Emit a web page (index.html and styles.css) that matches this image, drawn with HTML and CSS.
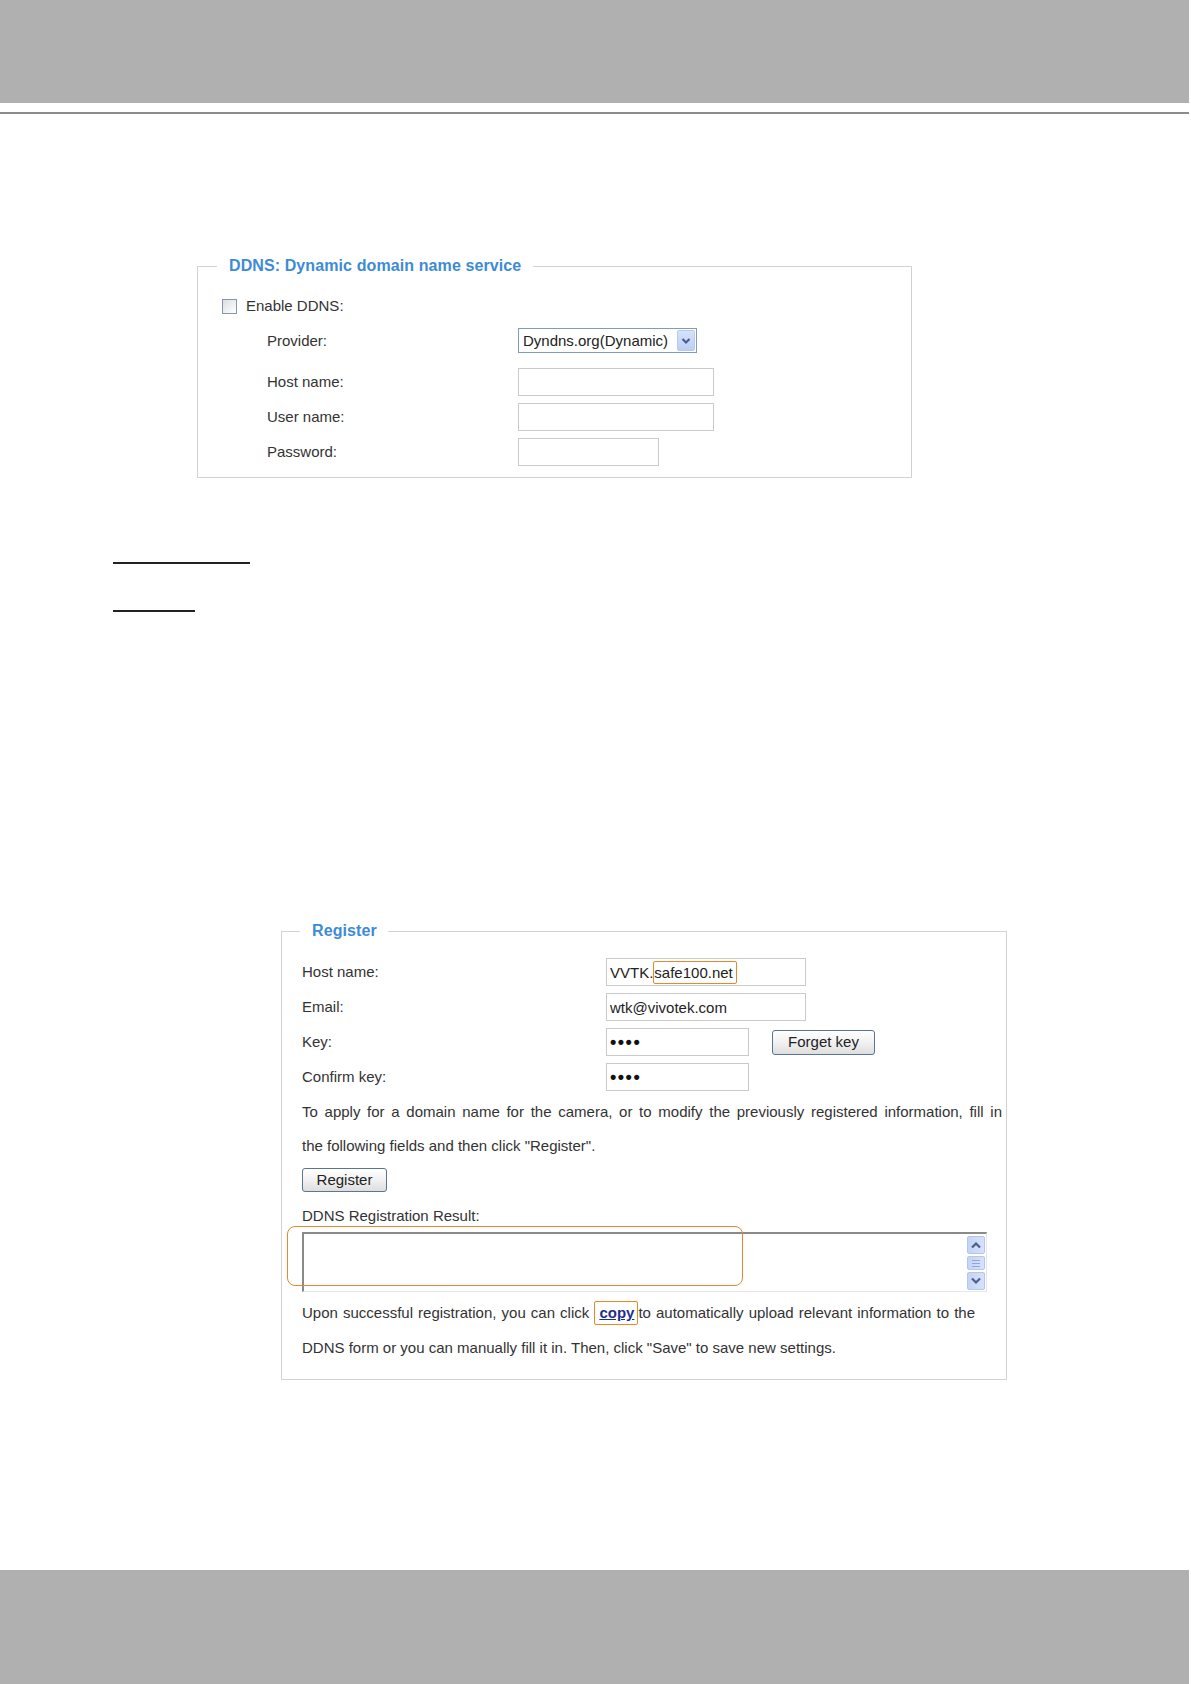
FILE: index.html
```html
<!DOCTYPE html>
<html lang="en">
<head>
<meta charset="utf-8">
<title>DDNS settings</title>
<link rel="stylesheet" href="styles.css">
</head>
<body>
<header class="page-header"></header>
<div class="page-rule"></div>

<main class="content">
  <fieldset class="panel panel-ddns">
    <legend class="panel-title">DDNS: Dynamic domain name service</legend>
    <div class="ddns-body">
      <div class="check-row">
        <span class="checkbox"></span>
        <span class="label">Enable DDNS:</span>
      </div>
      <div class="field-row row-provider">
        <span class="label field-label">Provider:</span>
        <div class="select">
          <span class="select-text">Dyndns.org(Dynamic)</span>
          <span class="select-btn">
            <svg width="10" height="8" viewBox="0 0 10 8"><polyline points="1.5,2 5,5.5 8.5,2" fill="none" stroke="#4b5f88" stroke-width="2.2"/></svg>
          </span>
        </div>
      </div>
      <div class="field-row row-host">
        <span class="label field-label">Host name:</span>
        <div class="textbox tb-wide"></div>
      </div>
      <div class="field-row row-gap">
        <span class="label field-label">User name:</span>
        <div class="textbox tb-wide"></div>
      </div>
      <div class="field-row row-gap">
        <span class="label field-label">Password:</span>
        <div class="textbox tb-short"></div>
      </div>
    </div>
  </fieldset>

  <div class="underline underline-1"></div>
  <div class="underline underline-2"></div>

  <fieldset class="panel panel-register">
    <legend class="panel-title">Register</legend>
    <div class="reg-body">
      <div class="reg-row">
        <span class="label reg-label">Host name:</span>
        <div class="textbox tb-reg">VVTK.<span class="mark mark-host">safe100.net</span></div>
      </div>
      <div class="reg-row reg-gap">
        <span class="label reg-label">Email:</span>
        <div class="textbox tb-reg">wtk@vivotek.com</div>
      </div>
      <div class="reg-row reg-gap">
        <span class="label reg-label">Key:</span>
        <div class="textbox tb-key"><span class="dots">••••</span></div>
        <button class="btn btn-forget" type="button">Forget key</button>
      </div>
      <div class="reg-row reg-gap">
        <span class="label reg-label">Confirm key:</span>
        <div class="textbox tb-key"><span class="dots">••••</span></div>
      </div>
      <p class="reg-text reg-text-1"><span class="line-just line-w1">To apply for a domain name for the camera, or to modify the previously registered information, fill in</span><span class="line">the following fields and then click "Register".</span></p>
      <button class="btn btn-register" type="button">Register</button>
      <div class="result-label">DDNS Registration Result:</div>
      <div class="result-wrap">
        <div class="result-area">
          <div class="result-text"></div>
          <div class="scrollbar">
            <span class="sb-btn">
              <svg width="12" height="8" viewBox="0 0 12 8"><polyline points="2,6.5 6,2.5 10,6.5" fill="none" stroke="#4b5f88" stroke-width="2.2"/></svg>
            </span>
            <span class="sb-thumb"><i></i><i></i><i></i></span>
            <span class="sb-btn">
              <svg width="12" height="8" viewBox="0 0 12 8"><polyline points="2,1.5 6,5.5 10,1.5" fill="none" stroke="#4b5f88" stroke-width="2.2"/></svg>
            </span>
          </div>
        </div>
        <div class="mark-box"></div>
      </div>
      <p class="reg-text reg-text-2"><span class="line-just line-w2">Upon successful registration, you can click <span class="mark mark-copy"><a class="copy-link" href="#">copy</a></span>to automatically upload relevant information to the</span><span class="line">DDNS form or you can manually fill it in. Then, click "Save" to save new settings.</span></p>
    </div>
  </fieldset>
</main>

<footer class="page-footer"></footer>
</body>
</html>
```

FILE: styles.css
```css
* { box-sizing: border-box; }

html, body { margin: 0; padding: 0; background: #fff; }

body {
  width: 1191px;
  height: 1684px;
  display: flex;
  flex-direction: column;
  font-family: "Liberation Sans", Arial, sans-serif;
  font-size: 15px;
  color: #333;
}

.page-header {
  height: 103px;
  margin-right: 2px;
  background: #b0b0b0;
}

.page-rule {
  height: 2px;
  margin-top: 9px;
  margin-right: 2px;
  background: #8c8c8c;
}

.content {
  padding-top: 142px;
}

.panel {
  margin: 0;
  padding: 0;
  border: 1px solid #d2d2d2;
  min-width: 0;
}

.panel-title {
  padding: 0 12px;
  font-size: 16px;
  font-weight: bold;
  line-height: 20px;
  letter-spacing: 0.1px;
  color: #3d8bd6;
}

/* DDNS panel */
.panel-ddns {
  margin-left: 197px;
  width: 715px;
}

.panel-ddns .panel-title { margin-left: 19px; }

.ddns-body {
  padding: 19px 0 11px 24px;
}

.label { line-height: 20px; white-space: nowrap; }

.check-row {
  display: flex;
  align-items: center;
  height: 22px;
}

.checkbox {
  width: 15px;
  height: 15px;
  margin-right: 9px;
  border: 1px solid #8596ad;
  background: linear-gradient(135deg, #d9dee6 0%, #f4f5f7 70%, #ffffff 100%);
}

.field-row {
  display: flex;
  align-items: center;
}

.field-label {
  width: 296px;
  padding-left: 45px;
  flex: none;
}

.row-provider { margin-top: 11px; height: 25px; }
.row-host { margin-top: 15px; height: 28px; }
.row-gap { margin-top: 7px; height: 28px; }

.select {
  width: 179px;
  height: 25px;
  display: flex;
  align-items: center;
  border: 1px solid #7f9db9;
  background: #fff;
  padding: 1px 1px 1px 4px;
}

.select-text { flex: 1; line-height: 20px; color: #222; }

.select-btn {
  width: 18px;
  height: 21px;
  display: flex;
  align-items: center;
  justify-content: center;
  border: 1px solid #b8c9ed;
  border-radius: 2px;
  background: linear-gradient(#d6e2fb, #bccff5);
}

.textbox {
  height: 28px;
  border: 1px solid #cacaca;
  background: #fff;
  padding: 0 3px;
  display: flex;
  align-items: center;
  white-space: nowrap;
  color: #222;
}

.tb-wide { width: 196px; }
.tb-short { width: 141px; }

/* Underlines */
.underline {
  height: 2px;
  margin-left: 113px;
  background: #222;
}
.underline-1 { width: 137px; margin-top: 84px; }
.underline-2 { width: 82px; margin-top: 46px; }

/* Register panel */
.panel-register {
  margin-left: 281px;
  margin-top: 309px;
  width: 726px;
}

.panel-register .panel-title { margin-left: 18px; padding: 0 11px 0 12px; }

.reg-body {
  padding: 17px 0 14px 20px;
}

.reg-row {
  display: flex;
  align-items: center;
  height: 28px;
}

.reg-gap { margin-top: 7px; }

.reg-label { width: 304px; flex: none; }

.tb-reg { width: 200px; }
.tb-key { width: 143px; }

.dots {
  font-size: 18px;
  line-height: 20px;
  letter-spacing: 1.5px;
  color: #111;
  font-weight: bold;
}

.mark {
  border: 1.5px solid #e9872a;
  border-radius: 2px;
}

.mark-host {
  display: inline-block;
  line-height: 21px;
  padding: 0 3px 0 0;
}

.btn {
  font-family: "Liberation Sans", Arial, sans-serif;
  font-size: 15px;
  color: #222;
  border: 1px solid #5c7590;
  border-radius: 3px;
  background: linear-gradient(#ffffff 0%, #f1f1f1 50%, #dedede 100%);
  padding: 0;
  line-height: 20px;
}

.btn-forget {
  width: 103px;
  height: 25px;
  margin-left: 23px;
}

.reg-text {
  margin: 0;
  line-height: 34px;
  white-space: nowrap;
}

.line { display: block; }

.line-just {
  display: block;
  white-space: normal;
  text-align: justify;
  text-align-last: justify;
}

.line-w1 { width: 700px; }
.line-w2 { width: 673px; }

.reg-text-1 { margin-top: 4px; }

.btn-register {
  display: block;
  width: 85px;
  height: 24px;
  margin-top: 5px;
}

.result-label {
  margin-top: 14px;
  line-height: 20px;
}

.result-wrap {
  position: relative;
  margin-top: 6px;
  width: 685px;
}

.result-area {
  height: 60px;
  display: flex;
  border-top: 2px solid #8a8a8a;
  border-left: 2px solid #8a8a8a;
  border-right: 1px solid #e6e6e6;
  border-bottom: 1px solid #e6e6e6;
  background: #fff;
}

.result-text { flex: 1; }

.scrollbar {
  width: 20px;
  display: flex;
  flex-direction: column;
  gap: 2px;
  padding: 2px 1px 1px 1px;
}

.sb-btn, .sb-thumb {
  display: flex;
  align-items: center;
  justify-content: center;
  border: 1px solid #b5c6ec;
  border-radius: 2px;
  background: linear-gradient(90deg, #c4d4f7, #d6e2fb);
}

.sb-btn { height: 18px; }

.sb-thumb {
  height: 15px;
  flex-direction: column;
  gap: 2px;
}

.sb-thumb i {
  display: block;
  width: 8px;
  height: 1px;
  background: #8ea5d6;
}

.mark-box {
  position: absolute;
  left: -15px;
  top: -6px;
  width: 456px;
  height: 60px;
  border: 1.5px solid #e9872a;
  border-radius: 8px;
  pointer-events: none;
}

.reg-text-2 { margin-top: 3px; line-height: 35px; }

.mark-copy {
  display: inline-block;
  line-height: 22px;
  padding: 0 3px 0 4px;
}

.copy-link {
  font-weight: bold;
  color: #1f2e8c;
  text-decoration: underline;
}

.page-footer {
  margin-top: auto;
  height: 114px;
  margin-right: 2px;
  background: #b0b0b0;
}
```
